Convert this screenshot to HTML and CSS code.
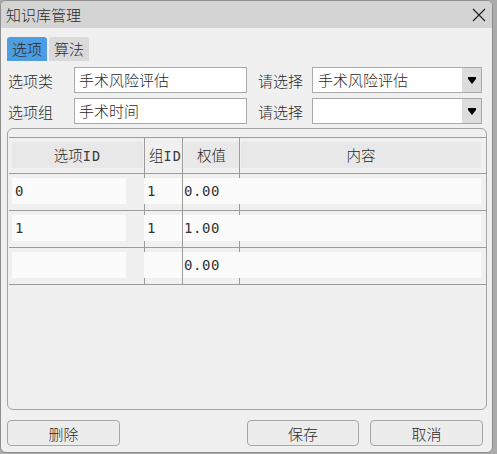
FILE: index.html
```html
<!DOCTYPE html>
<html>

<head>
    <meta charset="utf-8">
    <title>知识库管理</title>
    <link rel="stylesheet" href="styles.css">
</head>

<body>
    <div class="window">
        <div class="titlebar">
            <span class="title">知识库管理</span>
            <svg class="close_btn" width="14" height="14" viewBox="0 0 14 14">
                <path d="M1 1 L13 13 M13 1 L1 13" stroke="#222" stroke-width="1.2" fill="none" />
            </svg>
        </div>

        <div class="content">
            <div class="tabs">
                <div class="tab active">选项</div>
                <div class="tab">算法</div>
            </div>

            <div class="form_row">
                <div class="label">选项类</div>
                <div class="text_input">手术风险评估</div>
                <div class="label label_right">请选择</div>
                <div class="combo">
                    <div class="combo_text">手术风险评估</div>
                    <div class="combo_btn">
                        <svg width="8" height="8" viewBox="0 0 8 8"><path d="M0 1 H8 V3 L4 8 L0 3 Z" fill="#000" /></svg>
                    </div>
                </div>
            </div>

            <div class="form_row">
                <div class="label">选项组</div>
                <div class="text_input">手术时间</div>
                <div class="label label_right">请选择</div>
                <div class="combo">
                    <div class="combo_text"></div>
                    <div class="combo_btn">
                        <svg width="8" height="8" viewBox="0 0 8 8"><path d="M0 1 H8 V3 L4 8 L0 3 Z" fill="#000" /></svg>
                    </div>
                </div>
            </div>

            <div class="group_box">
                <div class="grid">
                    <div class="grid_row head_row">
                        <div class="cell c1"><div class="head_box center">选项<span class="latin">ID</span></div></div>
                        <div class="cell c2"><div class="head_box plain">组<span class="latin">ID</span></div></div>
                        <div class="cell c3"><div class="head_box center">权值</div></div>
                        <div class="cell c4"><div class="head_box center">内容</div></div>
                    </div>
                    <div class="grid_row">
                        <div class="cell c1"><div class="edit">0</div></div>
                        <div class="cell c2"><div class="edit">1</div></div>
                        <div class="cell c3"><div class="edit">0.00</div></div>
                        <div class="cell c4"><div class="edit"></div></div>
                    </div>
                    <div class="grid_row">
                        <div class="cell c1"><div class="edit">1</div></div>
                        <div class="cell c2"><div class="edit">1</div></div>
                        <div class="cell c3"><div class="edit">1.00</div></div>
                        <div class="cell c4"><div class="edit"></div></div>
                    </div>
                    <div class="grid_row">
                        <div class="cell c1"><div class="edit"></div></div>
                        <div class="cell c2"><div class="edit"></div></div>
                        <div class="cell c3"><div class="edit">0.00</div></div>
                        <div class="cell c4"><div class="edit"></div></div>
                    </div>
                </div>
            </div>

            <div class="buttons">
                <button class="btn btn_delete">删除</button>
                <button class="btn btn_save">保存</button>
                <button class="btn btn_cancel">取消</button>
            </div>
        </div>
    </div>
</body>

</html>
```

FILE: styles.css
```css
html,
body {
    margin: 0;
    padding: 0;
}

body {
    background-color: #ababab;
    color: #2a2a2a;
    font-family: 'Noto Sans CJK SC', 'Noto Sans', sans-serif;
    font-size: 15px;
    font-weight: 300;
}

.window {
    width: 491px;
    height: 451px;
    background-color: #f0f0f0;
    border: 1px solid #8e8e8e;
    border-radius: 6px;
    overflow: hidden;
}

.titlebar {
    height: 27px;
    background-color: #d4d4d4;
    display: flex;
    align-items: center;
    justify-content: space-between;
    padding: 0 6px 0 5px;
}

.title {
    line-height: 27px;
}

.content {
    padding: 9px 5px 0 6px;
}

/* tab strip */
.tabs {
    display: flex;
    gap: 2px;
    height: 24px;
}

.tab {
    width: 40px;
    height: 24px;
    line-height: 24px;
    text-align: center;
    background-color: #dadada;
    border-radius: 3px 3px 0 0;
}

.tab.active {
    background-color: #4d9de0;
}

/* form rows */
.form_row {
    display: flex;
    align-items: center;
    height: 26px;
    margin-top: 6px;
}

.form_row + .form_row {
    margin-top: 5px;
}

.label {
    width: 67px;
    padding-left: 1px;
    box-sizing: border-box;
}

.label_right {
    width: 55px;
    margin-left: 10px;
}

.text_input {
    width: 173px;
    height: 26px;
    box-sizing: border-box;
    background-color: #fff;
    border: 1px solid #a9a9a9;
    padding-left: 4px;
    line-height: 24px;
}

.combo {
    width: 170px;
    height: 26px;
    box-sizing: border-box;
    display: flex;
    background-color: #fff;
    border: 1px solid #a9a9a9;
}

.combo_text {
    flex: 1;
    padding-left: 5px;
    line-height: 24px;
}

.combo_btn {
    width: 19px;
    background-color: #dcdcdc;
    display: flex;
    align-items: center;
    justify-content: center;
}

/* table inside the group box */
.group_box {
    margin-top: 4px;
    width: 480px;
    height: 282px;
    box-sizing: border-box;
    border: 1px solid #a3a3a3;
    border-radius: 6px;
    padding: 8px 0 0 1px;
}

.grid_row {
    display: grid;
    grid-template-columns: 135px 38px 57px 246px;
    height: 36px;
    border-bottom: 1px solid #9c9c9c;
}

.head_row {
    height: 37px;
    border-top: 1px solid #9c9c9c;
    box-sizing: border-box;
}

.cell {
    box-sizing: border-box;
    min-width: 0;
}

.c2,
.c3,
.c4 {
    border-left: 1px solid #9c9c9c;
}

.head_box {
    height: 26px;
    margin-top: 4px;
    line-height: 26px;
    font-size: 14.5px;
    white-space: nowrap;
}

.latin {
    font-family: 'DejaVu Sans Mono', monospace;
    font-weight: 400;
    font-size: 13.5px;
    letter-spacing: 1px;
    color: #3a3a3a;
}

.center {
    background-color: #e8e8e8;
    text-align: center;
}

.c1 .head_box {
    margin-left: 3px;
    margin-right: 1px;
}

.c3 .head_box {
    margin-left: 1px;
}

.c4 .head_box {
    margin-left: 1px;
    margin-right: 4px;
}

.plain {
    padding-left: 4px;
}

.edit {
    height: 26px;
    margin-top: 4px;
    background-color: #fbfbfb;
    line-height: 26px;
    font-family: 'DejaVu Sans Mono', monospace;
    font-size: 14px;
    font-weight: 400;
    color: #333;
    padding-left: 3px;
    box-sizing: border-box;
}

.c1 .edit {
    margin-left: 3px;
    width: 114px;
}

.c2 .edit {
    margin-left: -1px;
    width: 38px;
}

.c3 .edit {
    width: 56px;
    padding-left: 1px;
    letter-spacing: 0.6px;
}

.c4 .edit {
    margin-left: -1px;
    width: 242px;
}

/* bottom buttons */
.buttons {
    display: flex;
    margin-top: 10px;
}

.btn {
    height: 26px;
    background-color: #ececec;
    border: 1px solid #a6a6a6;
    border-radius: 4px;
    font-family: 'Noto Sans CJK SC', sans-serif;
    font-size: 15px;
    font-weight: 300;
    color: #2a2a2a;
    padding: 0;
}

.btn_delete {
    width: 113px;
}

.btn_save {
    width: 112px;
    margin-left: 127px;
}

.btn_cancel {
    width: 113px;
    margin-left: 11px;
}
```
